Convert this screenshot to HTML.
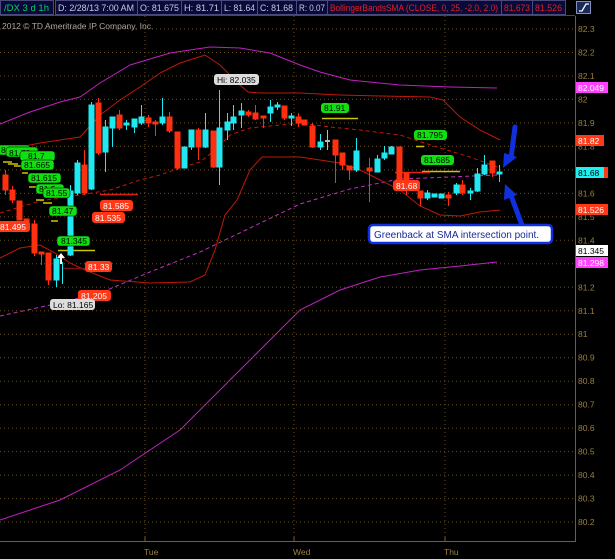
<!DOCTYPE html>
<html><head><meta charset="utf-8"><style>
html,body{margin:0;padding:0;background:#000;width:615px;height:559px;overflow:hidden;font-family:"Liberation Sans",sans-serif}
svg{display:block}
text{font-family:"Liberation Sans",sans-serif}
</style></head><body>
<svg width="615" height="559" viewBox="0 0 615 559" xmlns="http://www.w3.org/2000/svg">
<rect width="615" height="559" fill="#000"/>
<!-- header -->
<g font-size="9">
<rect x="0.5" y="0.5" width="53" height="14" fill="#0a0a3a" stroke="#4a4a7a"/>
<text x="4" y="11" fill="#00d060" textLength="45" lengthAdjust="spacingAndGlyphs">/DX 3 d 1h</text>
<rect x="55.5" y="0.5" width="82" height="14" fill="#0a0a3a" stroke="#4a4a7a"/>
<text x="58" y="11" fill="#c8c8e0" textLength="76" lengthAdjust="spacingAndGlyphs">D: 2/28/13 7:00 AM</text>
<rect x="137.5" y="0.5" width="44" height="14" fill="#0a0a3a" stroke="#4a4a7a"/>
<text x="140" y="11" fill="#c8c8e0" textLength="39" lengthAdjust="spacingAndGlyphs">O: 81.675</text>
<rect x="181.5" y="0.5" width="40" height="14" fill="#0a0a3a" stroke="#4a4a7a"/>
<text x="184" y="11" fill="#c8c8e0" textLength="35" lengthAdjust="spacingAndGlyphs">H: 81.71</text>
<rect x="221.5" y="0.5" width="36" height="14" fill="#0a0a3a" stroke="#4a4a7a"/>
<text x="224" y="11" fill="#c8c8e0" textLength="31" lengthAdjust="spacingAndGlyphs">L: 81.64</text>
<rect x="257.5" y="0.5" width="39" height="14" fill="#0a0a3a" stroke="#4a4a7a"/>
<text x="260" y="11" fill="#c8c8e0" textLength="33" lengthAdjust="spacingAndGlyphs">C: 81.68</text>
<rect x="296.5" y="0.5" width="31" height="14" fill="#0a0a3a" stroke="#4a4a7a"/>
<text x="299" y="11" fill="#c8c8e0" textLength="26" lengthAdjust="spacingAndGlyphs">R: 0.07</text>
<rect x="327.5" y="0.5" width="174" height="14" fill="#0a0a3a" stroke="#4a4a7a"/>
<text x="330" y="11" fill="#e02020" textLength="168" lengthAdjust="spacingAndGlyphs">BollingerBandsSMA (CLOSE, 0, 25, -2.0, 2.0)</text>
<rect x="501.5" y="0.5" width="31" height="14" fill="#0a0a3a" stroke="#4a4a7a"/>
<text x="504" y="11" fill="#e02020" textLength="26" lengthAdjust="spacingAndGlyphs">81.673</text>
<rect x="532.5" y="0.5" width="33" height="14" fill="#0a0a3a" stroke="#4a4a7a"/>
<text x="535" y="11" fill="#e02020" textLength="27" lengthAdjust="spacingAndGlyphs">81.526</text>
</g>
<rect x="576.5" y="1.5" width="14" height="12" fill="#1a2a5a" stroke="#8090c0"/>
<path d="M579 11 L582 11 L586 4 L589 4" stroke="#fff" fill="none" stroke-width="1.3"/>
<line x1="0" y1="15.5" x2="575" y2="15.5" stroke="#5a4a20"/>
<text x="2" y="29" fill="#aaa" font-size="8.5">2012 © TD Ameritrade IP Company, Inc.</text>
<!-- grid -->
<g stroke="#6a5018" stroke-dasharray="1,3">
<line x1="0" x2="575" y1="29" y2="29"/><line x1="0" x2="575" y1="52.5" y2="52.5"/><line x1="0" x2="575" y1="76" y2="76"/><line x1="0" x2="575" y1="99.4" y2="99.4"/><line x1="0" x2="575" y1="122.9" y2="122.9"/><line x1="0" x2="575" y1="146.4" y2="146.4"/><line x1="0" x2="575" y1="169.9" y2="169.9"/><line x1="0" x2="575" y1="193.4" y2="193.4"/><line x1="0" x2="575" y1="216.8" y2="216.8"/><line x1="0" x2="575" y1="240.3" y2="240.3"/><line x1="0" x2="575" y1="263.8" y2="263.8"/><line x1="0" x2="575" y1="287.3" y2="287.3"/><line x1="0" x2="575" y1="310.8" y2="310.8"/><line x1="0" x2="575" y1="334.2" y2="334.2"/><line x1="0" x2="575" y1="357.7" y2="357.7"/><line x1="0" x2="575" y1="381.2" y2="381.2"/><line x1="0" x2="575" y1="404.7" y2="404.7"/><line x1="0" x2="575" y1="428.2" y2="428.2"/><line x1="0" x2="575" y1="451.6" y2="451.6"/><line x1="0" x2="575" y1="475.1" y2="475.1"/><line x1="0" x2="575" y1="498.6" y2="498.6"/><line x1="0" x2="575" y1="522" y2="522"/>
<line x1="145" x2="145" y1="16" y2="541"/><line x1="294" x2="294" y1="16" y2="541"/><line x1="445" x2="445" y1="16" y2="541"/>
</g>
<line x1="0" y1="541.5" x2="576" y2="541.5" stroke="#7a6020"/>
<line x1="575.5" y1="16" x2="575.5" y2="541" stroke="#7a6020"/>
<g stroke="#7a6020"><line x1="145" x2="145" y1="537" y2="541"/><line x1="294" x2="294" y1="537" y2="541"/><line x1="445" x2="445" y1="537" y2="541"/></g>
<g fill="#9a8040" font-size="8.5">
<text x="144" y="555">Tue</text><text x="293" y="555">Wed</text><text x="444" y="555">Thu</text>
<text x="578" y="32">82.3</text><text x="578" y="55.5">82.2</text><text x="578" y="79">82.1</text><text x="578" y="102.4">82</text><text x="578" y="125.9">81.9</text><text x="578" y="149.4">81.8</text><text x="578" y="172.9">81.7</text><text x="578" y="196.4">81.6</text><text x="578" y="219.8">81.5</text><text x="578" y="243.3">81.4</text><text x="578" y="266.8">81.3</text><text x="578" y="290.3">81.2</text><text x="578" y="313.8">81.1</text><text x="578" y="337.2">81</text><text x="578" y="360.7">80.9</text><text x="578" y="384.2">80.8</text><text x="578" y="407.7">80.7</text><text x="578" y="431.2">80.6</text><text x="578" y="454.6">80.5</text><text x="578" y="478.1">80.4</text><text x="578" y="501.6">80.3</text><text x="578" y="525">80.2</text>
</g>
<!-- bands -->
<g fill="none" stroke-width="1">
<polyline stroke="#c020c0" points="0,124 30,112 60,102 80,97 100,83 130,65 170,53 210,47 240,48 270,53 300,65 320,72 350,80 400,85 450,87 497,88"/>
<polyline stroke="#c020c0" points="0,520 60,500 120,470 180,430 230,380 270,340 300,310 340,290 380,277 420,270 460,266 497,262"/>
<polyline stroke="#c030c0" stroke-dasharray="4,3" points="0,316 50,305 100,293 150,272 200,252 250,228 300,204 350,189 400,179 450,177 497,175"/>
<polyline stroke="#c01808" points="0,153 20,147 40,143 60,140 80,137 100,115 120,100 140,87 160,73 180,63 205,55 220,65 240,85 248,92 260,93 300,93 340,95 380,96 430,97 443,100 460,117 480,130 500,140"/>
<polyline stroke="#c01808" stroke-dasharray="4,3" points="0,213 40,201 80,195 110,190 140,180 160,175 180,168 200,162 215,150 230,135 250,128 280,125 300,123 330,127 360,130 400,135 440,148 470,157 500,168"/>
<polyline stroke="#c01808" points="0,258 20,248 40,245 55,253 70,263 85,270 110,280 150,283 190,282 205,275 215,250 225,215 237,200 250,170 262,157 300,157 320,160 340,163 360,170 380,180 400,190 420,206 440,215 460,216 480,212 500,210"/>
</g>
<!-- level lines -->
<g stroke-width="1.5">
<line x1="58" y1="250.5" x2="95" y2="250.5" stroke="#c8c800"/>
<line x1="100" y1="194.5" x2="138" y2="194.5" stroke="#e02010"/>
<line x1="63" y1="268.5" x2="86" y2="268.5" stroke="#801010"/>
<line x1="322" y1="118.5" x2="358" y2="118.5" stroke="#c8c800"/>
<line x1="416" y1="146.5" x2="424" y2="146.5" stroke="#c8c800"/>
<line x1="422" y1="171.5" x2="460" y2="171.5" stroke="#c8c800"/>
<line x1="395" y1="172.5" x2="430" y2="172.5" stroke="#e02010"/>
<line x1="3" y1="162" x2="12" y2="162" stroke="#c8c800"/><line x1="8" y1="164" x2="18" y2="164" stroke="#c8c800"/><line x1="14" y1="166" x2="26" y2="166" stroke="#c8c800"/><line x1="22" y1="173" x2="28" y2="173" stroke="#c8c800"/><line x1="29" y1="187" x2="36" y2="187" stroke="#c8c800"/><line x1="36" y1="200" x2="44" y2="200" stroke="#c8c800"/><line x1="43" y1="203" x2="52" y2="203" stroke="#c8c800"/><line x1="51" y1="221" x2="58" y2="221" stroke="#c8c800"/>
</g>
<!-- candles -->
<g stroke-width="1">
<g stroke="#ff3010" fill="#ff3010">
<line x1="5.5" y1="170" x2="5.5" y2="195"/><rect x="3" y="175" width="5" height="15"/>
<rect x="10" y="190" width="5" height="10"/><line x1="12.5" y1="186" x2="12.5" y2="203"/>
<rect x="17" y="201" width="5" height="19"/>
<rect x="24" y="219" width="5" height="4"/>
<rect x="32" y="224" width="5" height="29"/><line x1="34.5" y1="220" x2="34.5" y2="256"/>
<line x1="41.5" y1="252" x2="41.5" y2="265"/><rect x="39" y="252" width="5" height="2"/>
<rect x="46" y="253" width="5" height="27"/><line x1="48.5" y1="253" x2="48.5" y2="285"/>
<rect x="82" y="165" width="5" height="28"/><line x1="84.5" y1="150" x2="84.5" y2="195"/>
<rect x="96" y="103" width="5" height="50"/><line x1="98.5" y1="98" x2="98.5" y2="155"/>
<rect x="117" y="115" width="5" height="13"/><line x1="119.5" y1="110" x2="119.5" y2="130"/>
<rect x="146" y="118" width="5" height="5"/><line x1="148.5" y1="115" x2="148.5" y2="127"/>
<rect x="153" y="122" width="5" height="2"/><line x1="155.5" y1="120" x2="155.5" y2="136"/>
<rect x="167" y="117" width="5" height="14"/><line x1="169.5" y1="112" x2="169.5" y2="133"/>
<rect x="175" y="132" width="5" height="36"/><line x1="177.5" y1="132" x2="177.5" y2="170"/>
<rect x="196" y="130" width="5" height="17"/><line x1="198.5" y1="128" x2="198.5" y2="160"/>
<rect x="211" y="131" width="5" height="36"/><line x1="213.5" y1="131" x2="213.5" y2="168"/>
<rect x="246" y="112" width="5" height="3"/><line x1="248.5" y1="110" x2="248.5" y2="117"/>
<rect x="253" y="113" width="5" height="6"/><line x1="255.5" y1="105" x2="255.5" y2="120"/>
<rect x="261" y="116" width="5" height="2"/><line x1="263.5" y1="116" x2="263.5" y2="128"/>
<rect x="282" y="106" width="5" height="12"/><line x1="284.5" y1="106" x2="284.5" y2="120"/>
<rect x="296" y="117" width="5" height="6"/><line x1="298.5" y1="113" x2="298.5" y2="127"/>
<rect x="302" y="120" width="5" height="5"/>
<rect x="310" y="126" width="5" height="21"/><line x1="312.5" y1="123" x2="312.5" y2="148"/>
<rect x="333" y="140" width="5" height="15"/><line x1="335.5" y1="140" x2="335.5" y2="183"/>
<rect x="340" y="153" width="5" height="12"/><line x1="342.5" y1="153" x2="342.5" y2="170"/>
<rect x="347" y="166" width="5" height="4"/><line x1="349.5" y1="166" x2="349.5" y2="180"/>
<rect x="367" y="168" width="5" height="3"/><line x1="369.5" y1="158" x2="369.5" y2="202"/>
<rect x="397" y="147" width="5" height="40"/>
<rect x="404" y="173" width="5" height="17"/><line x1="406.5" y1="173" x2="406.5" y2="195"/>
<rect x="418" y="191" width="5" height="7"/><line x1="420.5" y1="191" x2="420.5" y2="206"/>
<rect x="446" y="195" width="5" height="3"/><line x1="448.5" y1="192" x2="448.5" y2="206"/>
<rect x="460" y="185" width="5" height="8"/><line x1="462.5" y1="180" x2="462.5" y2="195"/>
<rect x="490" y="161" width="5" height="12"/><line x1="492.5" y1="161" x2="492.5" y2="177"/>
</g>
<g stroke="#20e8f0" fill="#20e8f0">
<rect x="54" y="259" width="5" height="21"/><line x1="56.5" y1="255" x2="56.5" y2="287"/>
<line x1="62.5" y1="262" x2="62.5" y2="284"/>
<rect x="68" y="191" width="5" height="64"/><line x1="70.5" y1="185" x2="70.5" y2="256"/>
<rect x="75" y="163" width="5" height="30"/><line x1="77.5" y1="160" x2="77.5" y2="195"/>
<rect x="89" y="105" width="5" height="84"/><line x1="91.5" y1="102" x2="91.5" y2="190"/>
<rect x="103" y="127" width="5" height="25"/><line x1="105.5" y1="120" x2="105.5" y2="172"/>
<rect x="110" y="117" width="5" height="11"/><line x1="112.5" y1="117" x2="112.5" y2="147"/>
<rect x="124" y="123" width="5" height="2"/><line x1="126.5" y1="120" x2="126.5" y2="130"/>
<rect x="132" y="119" width="5" height="8"/><line x1="134.5" y1="119" x2="134.5" y2="133"/>
<rect x="139" y="117" width="5" height="6"/><line x1="141.5" y1="105" x2="141.5" y2="125"/>
<rect x="160" y="117" width="5" height="6"/><line x1="162.5" y1="98" x2="162.5" y2="125"/>
<rect x="182" y="147" width="5" height="21"/><line x1="184.5" y1="147" x2="184.5" y2="168"/>
<rect x="189" y="130" width="5" height="17"/><line x1="191.5" y1="130" x2="191.5" y2="150"/>
<rect x="203" y="130" width="5" height="17"/><line x1="205.5" y1="113" x2="205.5" y2="148"/>
<rect x="217" y="128" width="5" height="39"/><line x1="219.5" y1="90" x2="219.5" y2="185"/>
<rect x="225" y="122" width="5" height="8"/><line x1="227.5" y1="113" x2="227.5" y2="140"/>
<rect x="231" y="117" width="5" height="6"/><line x1="233.5" y1="105" x2="233.5" y2="130"/>
<rect x="239" y="111" width="5" height="4"/><line x1="241.5" y1="103" x2="241.5" y2="128"/>
<rect x="268" y="107" width="5" height="6"/><line x1="270.5" y1="100" x2="270.5" y2="122"/>
<rect x="275" y="105" width="5" height="2"/><line x1="277.5" y1="102" x2="277.5" y2="110"/>
<rect x="289" y="116" width="5" height="2"/><line x1="291.5" y1="113" x2="291.5" y2="126"/>
<rect x="318" y="142" width="5" height="5"/><line x1="320.5" y1="134" x2="320.5" y2="150"/>
<rect x="354" y="151" width="5" height="19"/><line x1="356.5" y1="138" x2="356.5" y2="172"/>
<rect x="375" y="159" width="5" height="13"/><line x1="377.5" y1="155" x2="377.5" y2="172"/>
<rect x="382" y="153" width="5" height="5"/><line x1="384.5" y1="146" x2="384.5" y2="160"/>
<rect x="389" y="147" width="5" height="7"/><line x1="391.5" y1="146" x2="391.5" y2="154"/>
<rect x="411" y="187" width="5" height="3"/>
<rect x="425" y="193" width="5" height="5"/><line x1="427.5" y1="190" x2="427.5" y2="200"/>
<rect x="432" y="194" width="5" height="3"/>
<rect x="439" y="194" width="5" height="4"/>
<rect x="454" y="185" width="5" height="8"/><line x1="456.5" y1="183" x2="456.5" y2="195"/>
<rect x="468" y="191" width="5" height="2"/><line x1="470.5" y1="188" x2="470.5" y2="200"/>
<rect x="475" y="174" width="5" height="17"/><line x1="477.5" y1="168" x2="477.5" y2="192"/>
<rect x="482" y="165" width="5" height="9"/><line x1="484.5" y1="155" x2="484.5" y2="175"/>
<rect x="497" y="172" width="5" height="2"/><line x1="499.5" y1="165" x2="499.5" y2="182"/>
</g>
<line x1="327.5" y1="130" x2="327.5" y2="150" stroke="#bbb"/><rect x="325" y="140" width="5" height="2" fill="#bbb"/>
</g>
<path d="M61 253 L57 258 L60 258 L60 264 L62 264 L62 258 L65 258 Z" fill="#fff"/>
<!-- green labels -->
<g font-size="8.5" fill="#000">
<rect x="-2" y="145" width="32" height="10" rx="3" fill="#10e010" stroke="#000" stroke-width=".5"/><text x="1" y="153">81.735</text>
<rect x="6" y="147" width="32" height="10" rx="3" fill="#10e010" stroke="#000" stroke-width=".5"/><text x="9" y="156">81.72</text>
<rect x="20" y="151" width="35" height="10" rx="3" fill="#10e010" stroke="#000" stroke-width=".5"/><text x="28" y="159">81.7</text>
<rect x="21" y="160" width="33" height="10" rx="3" fill="#10e010" stroke="#000" stroke-width=".5"/><text x="24" y="168">81.665</text>
<rect x="28" y="173" width="33" height="10" rx="3" fill="#10e010" stroke="#000" stroke-width=".5"/><text x="31" y="181">81.615</text>
<rect x="36" y="184" width="28" height="10" rx="3" fill="#10e010" stroke="#000" stroke-width=".5"/><text x="39" y="192">81.5</text>
<rect x="43" y="188" width="27" height="10" rx="3" fill="#10e010" stroke="#000" stroke-width=".5"/><text x="46" y="196">81.55</text>
<rect x="49" y="206" width="28" height="10" rx="3" fill="#10e010" stroke="#000" stroke-width=".5"/><text x="52" y="214">81.47</text>
<rect x="57" y="236" width="33" height="10" rx="3" fill="#10e010" stroke="#000" stroke-width=".5"/><text x="61" y="244">81.345</text>
<rect x="321" y="103" width="28" height="10" rx="3" fill="#10e010"/><text x="324" y="111">81.91</text>
<rect x="414" y="130" width="33" height="10" rx="3" fill="#10e010"/><text x="417" y="138">81.795</text>
<rect x="421" y="155" width="33" height="10" rx="3" fill="#10e010"/><text x="424" y="163">81.685</text>
</g>
<!-- red labels -->
<g font-size="8.5" fill="#fff">
<rect x="-3" y="221" width="33" height="11" rx="3" fill="#ff3818"/><text x="0" y="230">81.495</text>
<rect x="100" y="200" width="33" height="11" rx="3" fill="#ff3818"/><text x="103" y="209">81.585</text>
<rect x="92" y="212" width="33" height="11" rx="3" fill="#ff3818"/><text x="95" y="221">81.535</text>
<rect x="85" y="261" width="27" height="11" rx="3" fill="#ff3818"/><text x="88" y="270">81.33</text>
<rect x="78" y="290" width="33" height="11" rx="3" fill="#ff3818"/><text x="81" y="299">81.205</text>
<rect x="393" y="180" width="27" height="11" rx="3" fill="#ff3818"/><text x="396" y="189">81.68</text>
</g>
<g font-size="8.5" fill="#000">
<rect x="50" y="299" width="45" height="11" rx="3" fill="#ddd"/><text x="53" y="308">Lo: 81.165</text>
<rect x="214" y="74" width="45" height="11" rx="3" fill="#ddd"/><text x="217" y="83">Hi: 82.035</text>
</g>
<!-- right tags -->
<g font-size="8.5">
<rect x="576" y="82" width="32" height="11" fill="#ff40ff"/><text x="578" y="91" fill="#fff">82.049</text>
<rect x="576" y="135" width="28" height="11" fill="#ff3818"/><text x="578" y="144" fill="#fff">81.82</text>
<rect x="576" y="167" width="32" height="11" fill="#ff3818"/><rect x="576" y="167" width="28" height="11" fill="#20f0f0"/><text x="578" y="176" fill="#000">81.68</text>
<rect x="576" y="204" width="32" height="11" fill="#ff3818"/><text x="578" y="213" fill="#fff">81.526</text>
<rect x="576" y="245" width="32" height="11" fill="#fff"/><text x="578" y="254" fill="#000">81.345</text>
<rect x="576" y="257" width="32" height="11" fill="#ff40ff"/><text x="578" y="266" fill="#fff">81.298</text>
</g>
<!-- blue arrows -->
<path d="M515 127 L511 158" stroke="#1030e0" stroke-width="5" stroke-linecap="round"/>
<path d="M503 168 L504 153 L517 157 Z" fill="#1030e0"/>
<path d="M522 225 L510 193" stroke="#1030e0" stroke-width="5" stroke-linecap="round"/>
<path d="M505 184 L504 200 L517 195 Z" fill="#1030e0"/>
<rect x="369" y="225" width="183" height="18" rx="4" fill="#fff" stroke="#1030e0" stroke-width="2.5"/>
<text x="374" y="238" font-size="10" fill="#1a2a9a">Greenback at SMA intersection point.</text>
</svg>
</body></html>
